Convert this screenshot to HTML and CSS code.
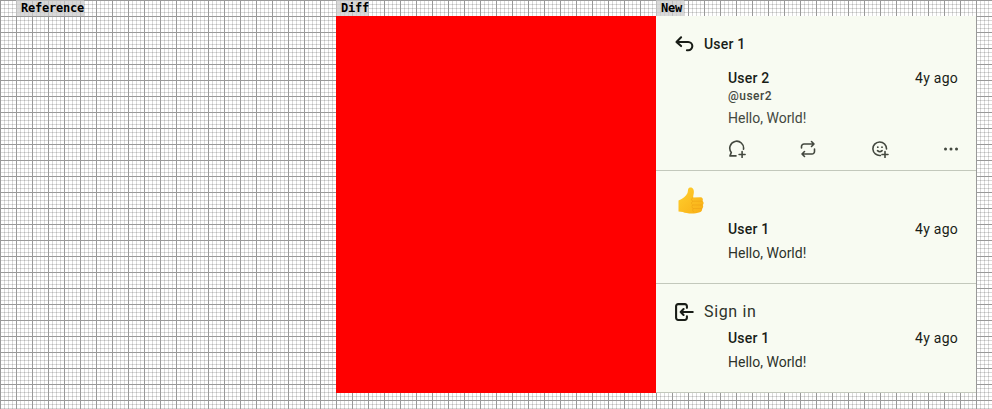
FILE: index.html
```html
<!DOCTYPE html>
<html lang="en">
<head>
<meta charset="utf-8">
<title>Snapshot comparison</title>
<link rel="stylesheet" href="styles.css">
</head>
<body>
<main class="board">
  <section class="column">
    <h2 class="label">Reference</h2>
  </section>
  <section class="column">
    <h2 class="label">Diff</h2>
    <div class="panel diff"></div>
  </section>
  <section class="column">
    <h2 class="label label-new">New</h2>
    <div class="panel feed">
      <article class="item reply">
        <header class="reason">
          <svg class="icon" viewBox="0 0 24 24"><path d="M8.500 4 3 9.500l5.500 5M3 9.500H17a5 5 0 0 1 0 10h-1.500"/></svg>
          <span class="reason-name">User 1</span>
        </header>
        <div class="note">
          <div class="row"><span class="name">User 2</span><time>4y ago</time></div>
          <div class="handle">@user2</div>
          <p class="text muted">Hello, World!</p>
          <div class="actions">
            <svg viewBox="0 0 18 18"><path d="M15.500 9.200A6.900 6.900 0 1 0 3.300 12.400L2 15.900h6M14.100 11.500v6M11.100 14.500h6"/></svg>
            <svg viewBox="0 0 18 18"><path d="M2.500 8V6.500a2.500 2.500 0 0 1 2.500-2.500h10M12.500 1.500 15 4l-2.500 2.500M15.500 9v2.500A2.500 2.500 0 0 1 13 14H3M5.500 11.500 3 14l2.500 2.500"/></svg>
            <svg viewBox="0 0 18 18"><path d="M15.500 9A6.800 6.800 0 1 0 9.500 15.500M14 11.500v6M11 14.500h6M6.500 10.700q2.300 2.100 4.600 0"/><path class="eyes" d="M6.800 7.200h.01M11 7.200h.01"/></svg>
            <svg viewBox="0 0 18 18"><path class="dots" d="M3.500 9h.01M9 9h.01M14.500 9h.01"/></svg>
          </div>
        </div>
      </article>
      <article class="item reaction">
        <svg class="thumb" viewBox="0 0 26 28">
          <defs><linearGradient id="skin" x2="1" y2="1"><stop stop-color="#ffd02e"/><stop offset="1" stop-color="#f9ae16"/></linearGradient></defs>
          <path fill="url(#skin)" d="M.5 13.500C5 12 8 9 9.500 6 10.300 4 9.500 1 12 .6c3-.4 4.300 2.500 3.800 5.400L15 10.500l7.500-.3c2 0 3 2 2 3.700 1.500 1 1.500 3 .2 4 .9 1.400.5 3-.7 3.600.6 1.700-.5 3.300-2.200 3.700-5 1.800-13 1.500-17-.3L.5 24.500z"/>
          <path fill="none" stroke="#eea216" stroke-width=".6" d="M15 10.500c-2 .7-2 3.300 0 3.700h9.500M14.500 14.300c-1.500.8-1.300 3 .2 3.700h10M14.700 18c-1.200.8-1 2.800.5 3.500H24M15.200 21.500c-1 1-.7 3 .5 3.500"/>
        </svg>
        <div class="note">
          <div class="row"><span class="name">User 1</span><time>4y ago</time></div>
          <p class="text">Hello, World!</p>
        </div>
      </article>
      <article class="item login">
        <header class="reason">
          <svg class="icon" viewBox="0 0 24 24"><path d="M15.500 7V5a2.500 2.500 0 0 0-2.500-2.500H5A2.500 2.500 0 0 0 2.500 5v14A2.500 2.500 0 0 0 5 21.500h8a2.500 2.500 0 0 0 2.500-2.500v-2M22.500 12H8M11.500 8.500 8 12l3.500 3.500"/></svg>
          <span class="reason-title">Sign in</span>
        </header>
        <div class="note">
          <div class="row"><span class="name">User 1</span><time>4y ago</time></div>
          <p class="text">Hello, World!</p>
        </div>
      </article>
    </div>
  </section>
</main>
</body>
</html>
```
FILE: styles.css
```css
* { box-sizing: border-box; }
body {
  margin: 0;
  width: 992px;
  height: 409px;
  overflow: hidden;
  font-family: Roboto, sans-serif;
  color: #191d17;
  background-color: #fff;
  background-image:
    linear-gradient(90deg, #999 1px, transparent 1px),
    linear-gradient(#999 1px, transparent 1px),
    linear-gradient(90deg, rgba(0,0,0,.15) 1px, transparent 1px),
    linear-gradient(rgba(0,0,0,.15) 1px, transparent 1px);
  background-size: 16px 16px, 16px 16px, 4px 4px, 4px 4px;
}
.board { display: grid; grid-template-columns: repeat(3, 320px); padding-left: 16px; }
.label {
  width: max-content;
  height: 16px;
  margin: 0;
  padding-left: 5px;
  background: rgba(204,204,204,.75);
  color: #000;
  font: bold 12px/16px "DejaVu Sans Mono", monospace;
  letter-spacing: -.224px;
}
.label-new { padding-right: 2px; }
.panel { height: 377px; }
.diff { background: #f00; }
.feed { background: #f8fbf2; border-bottom: 1px solid #c3c8bc; }
.item { padding-right: 18px; border-bottom: 1px solid #c3c8bc; }
.reply { height: 155px; padding-top: 16px; }
.reaction { height: 113px; padding-top: 16px; }
.login { height: 108px; padding-top: 16px; border: 0; }
.reason { display: flex; align-items: center; gap: 10px; height: 24px; padding-left: 18px; }
svg { display: block; fill: none; stroke: currentColor; stroke-width: 1.6; stroke-linecap: round; stroke-linejoin: round; }
.icon { width: 20px; height: 20px; stroke-width: 2.5; }
.reason-name { font-size: 14px; font-weight: 500; letter-spacing: .2px; line-height: 20px; }
.reason-title { font-size: 16px; letter-spacing: .65px; line-height: 24px; color: #2d322a; }
.note { padding-left: 72px; }
.reply .note { padding-top: 12px; }
.row { display: flex; justify-content: space-between; height: 20px; line-height: 20px; font-size: 14px; }
.name { font-weight: 500; letter-spacing: .2px; }
time { letter-spacing: .25px; }
.handle { height: 16px; line-height: 16px; font-size: 12px; font-weight: 500; letter-spacing: .5px; color: #43483f; }
.text { margin: 4px 0 0; font-size: 14px; line-height: 20px; letter-spacing: 0; color: #2d322a; }
.muted { color: #43483f; }
.actions { display: flex; justify-content: space-between; padding-top: 12px; color: #43483f; margin-right: -2px; }
.actions svg { width: 18px; height: 18px; }
.eyes { stroke-width: 1.8; }
.dots { stroke-width: 3; }
.thumb { width: 26px; height: 28px; margin: 0 0 4px 22px; stroke: none; }
.login .note { padding-top: 4px; }
```
